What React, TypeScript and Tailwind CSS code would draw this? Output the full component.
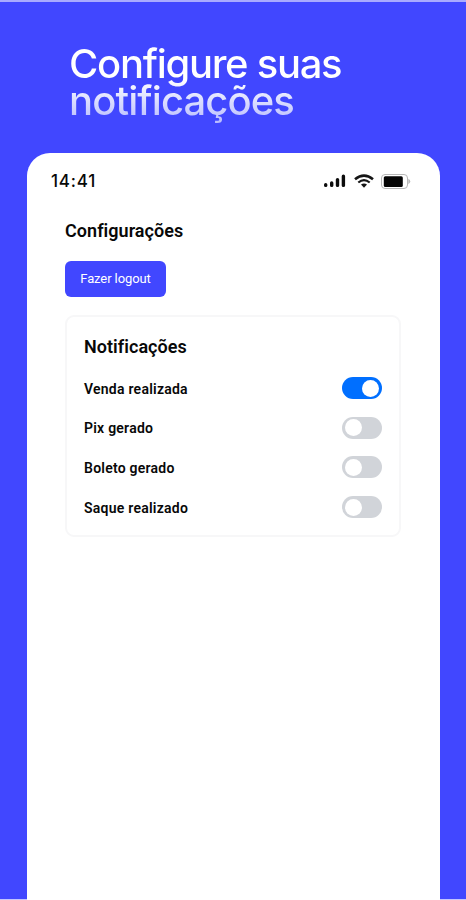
import React, { useState } from 'react';

const labels = ['Venda realizada', 'Pix gerado', 'Boleto gerado', 'Saque realizado'];

function StatusIcons() {
  return (
    <svg width="90" height="20" viewBox="0 0 90 20" aria-hidden="true">
      <g stroke="#0c0c0c" strokeWidth="3.4" strokeLinecap="round">
        <path d="M4.7 13.7v.7M10.7 11.9v2.5M16.5 8.6v5.8M22.4 5.2v9.2" />
      </g>
      <g fill="none" stroke="#151515" strokeWidth="2.6">
        <path d="M34 8.3Q43 .9 52 8.3" />
        <path d="M37.3 11.5Q43 6.9 48.7 11.5" strokeWidth="2.2" />
      </g>
      <path d="M40 13.5q3-2 6 0l-3 3.2z" fill="#151515" />
      <rect x="60.5" y="3.5" width="26" height="14" rx="3.5" fill="none" stroke="#b8b8b8" />
      <rect x="62.8" y="5.2" width="19" height="10.7" rx="1.5" fill="#050505" />
      <path d="M87.3 7.8q4 2.7 0 5.4z" fill="#b8b8b8" />
    </svg>
  );
}

function Toggle({ on, label, onClick }: { on: boolean; label: string; onClick: () => void }) {
  return (
    <button
      role="switch"
      aria-checked={on}
      aria-label={label}
      onClick={onClick}
      className={`flex h-[22px] w-10 items-center rounded-full px-[3px] ${on ? 'justify-end bg-[#006fff]' : 'justify-start bg-[#d1d4d9]'}`}
    >
      <span className="size-[17px] rounded-full bg-white" />
    </button>
  );
}

export default function App() {
  const [enabled, setEnabled] = useState([true, false, false, false]);
  return (
    <main className="flex h-[900px] w-[466px] flex-col overflow-hidden bg-[linear-gradient(to_bottom,#a9abff_2px,#4147ff_2px,#4147ff_899px,#c3c4ff_899px)] pt-0.5 font-['Roboto',sans-serif] text-[#080808]">
      <h1 className="ml-[69px] mt-[43px] h-[86px] bg-linear-to-b from-white from-40% to-[#b9bcff] to-90% bg-clip-text font-['Inter',sans-serif] text-[40px] leading-[37px] font-medium tracking-[-1.3px] whitespace-nowrap text-transparent">
        Configure suas<br /><span className="tracking-[-0.9px]">notificações</span>
      </h1>
      <section className="ml-[27px] mt-[22px] w-[413px] flex-1 rounded-t-[23px] bg-white">
        <div className="flex h-[56px] items-center justify-between pr-[29px] pl-[24px]">
          <time className="mt-0.5 font-['Inter',sans-serif] text-[17px] font-medium tracking-[0.8px]">14:41</time>
          <StatusIcons />
        </div>
        <div className="pr-[39px] pl-[38px]">
          <h2 className="mt-[10px] h-6 text-[18px] leading-6 font-semibold tracking-[0.04px]">Configurações</h2>
          <button className="mt-[18px] flex h-9 w-[101px] items-center justify-center rounded-[6px] bg-[#4147ff] text-[13px] tracking-[-0.1px] text-white">Fazer logout</button>
          <div className="mt-[18px] h-[222px] rounded-[9px] border-2 border-[#f7f7f8] px-[17px] pt-[18px]">
            <h3 className="h-6 text-[18px] leading-6 font-semibold tracking-[0.04px]">Notificações</h3>
            <div className="mt-[18px] flex flex-col gap-[17.7px]">
              {labels.map((label, i) => (
                <div key={label} className="flex h-[22px] items-center justify-between">
                  <span className="mt-0.5 text-[14px] font-semibold tracking-[0.24px]">{label}</span>
                  <Toggle label={label} on={enabled[i]} onClick={() => setEnabled(enabled.map((v, j) => (j === i ? !v : v)))} />
                </div>
              ))}
            </div>
          </div>
        </div>
      </section>
    </main>
  );
}
